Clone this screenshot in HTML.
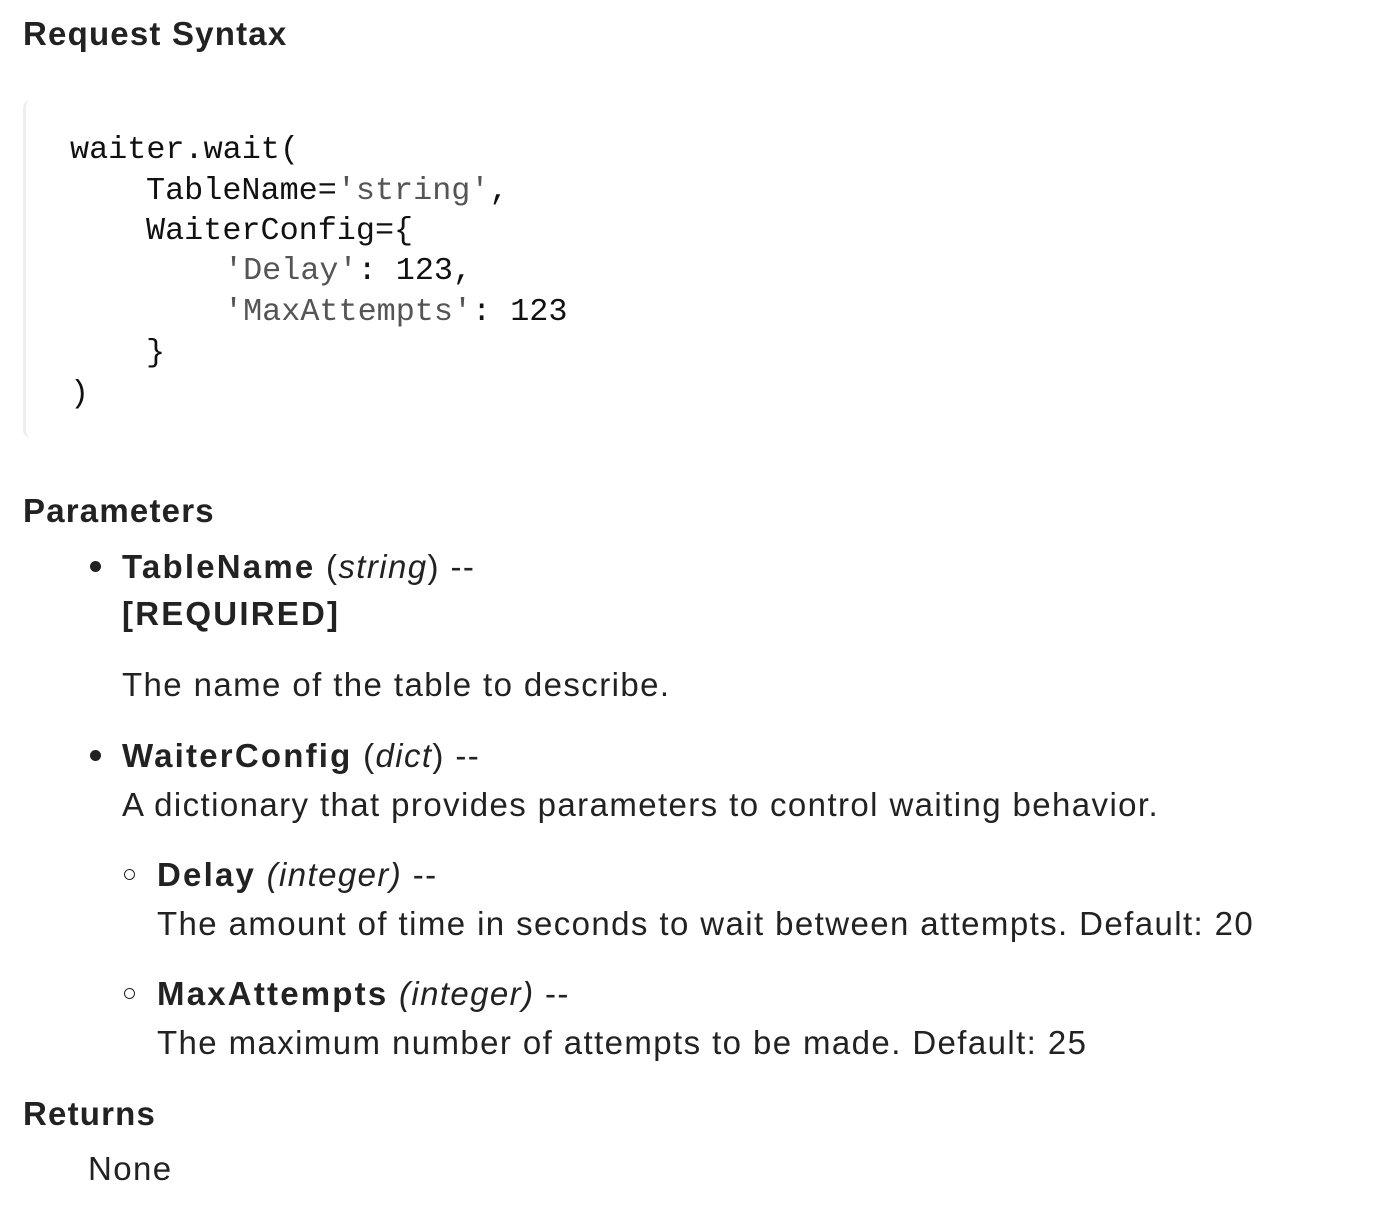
<!DOCTYPE html>
<html><head><meta charset="utf-8"><style>
body{margin:0;width:1400px;height:1225px;background:#fff;position:relative;font-family:"Liberation Sans",sans-serif;color:#222;overflow:hidden}
.a{position:absolute;white-space:nowrap;line-height:1}
h{font-weight:bold;font-size:33px;color:#222;letter-spacing:1.2px}
.t{font-size:33px;color:#222;letter-spacing:1.4px}
.t b{letter-spacing:2.2px}
.c{font-family:"Liberation Mono",monospace;font-size:31.8px;color:#111}
.s{color:#555}
.code{position:absolute;left:23px;top:100px;width:1200px;height:338px;border-left:3px solid #eee;border-radius:8px}
.dot{position:absolute;width:11px;height:11px;border-radius:50%;background:#222}
.circ{position:absolute;width:9px;height:9px;border-radius:50%;border:1.5px solid #222}
</style></head><body>
<div class="a" style="left:23px;top:17px"><h>Request Syntax</h></div>
<div class="code"></div>
<div class="a c" style="left:70px;top:135px">waiter.wait(</div>
<div class="a c" style="left:146px;top:176px">TableName=<span class="s">'string'</span>,</div>
<div class="a c" style="left:146px;top:216px">WaiterConfig={</div>
<div class="a c" style="left:224px;top:256px"><span class="s">'Delay'</span>: 123,</div>
<div class="a c" style="left:224px;top:297px"><span class="s">'MaxAttempts'</span>: 123</div>
<div class="a c" style="left:146px;top:338px">}</div>
<div class="a c" style="left:70px;top:379px">)</div>
<div class="a" style="left:23px;top:494px"><h>Parameters</h></div>
<div class="dot" style="left:90px;top:561px"></div>
<div class="a t" style="left:122px;top:550px"><b>TableName</b> (<i>string</i>) --</div>
<div class="a t" style="left:122px;top:597px"><b>[REQUIRED]</b></div>
<div class="a t" style="left:122px;top:668px">The name of the table to describe.</div>
<div class="dot" style="left:90px;top:750px"></div>
<div class="a t" style="left:122px;top:739px"><b>WaiterConfig</b> (<i>dict</i>) --</div>
<div class="a t" style="left:122px;top:788px">A dictionary that provides parameters to control waiting behavior.</div>
<div class="circ" style="left:124px;top:869px"></div>
<div class="a t" style="left:157px;top:858px"><b>Delay</b> <i>(integer)</i> --</div>
<div class="a t" style="left:157px;top:907px">The amount of time in seconds to wait between attempts. Default: 20</div>
<div class="circ" style="left:124px;top:988px"></div>
<div class="a t" style="left:157px;top:977px"><b>MaxAttempts</b> <i>(integer)</i> --</div>
<div class="a t" style="left:157px;top:1026px">The maximum number of attempts to be made. Default: 25</div>
<div class="a" style="left:23px;top:1097px"><h>Returns</h></div>
<div class="a t" style="left:88px;top:1152px">None</div>
</body></html>
